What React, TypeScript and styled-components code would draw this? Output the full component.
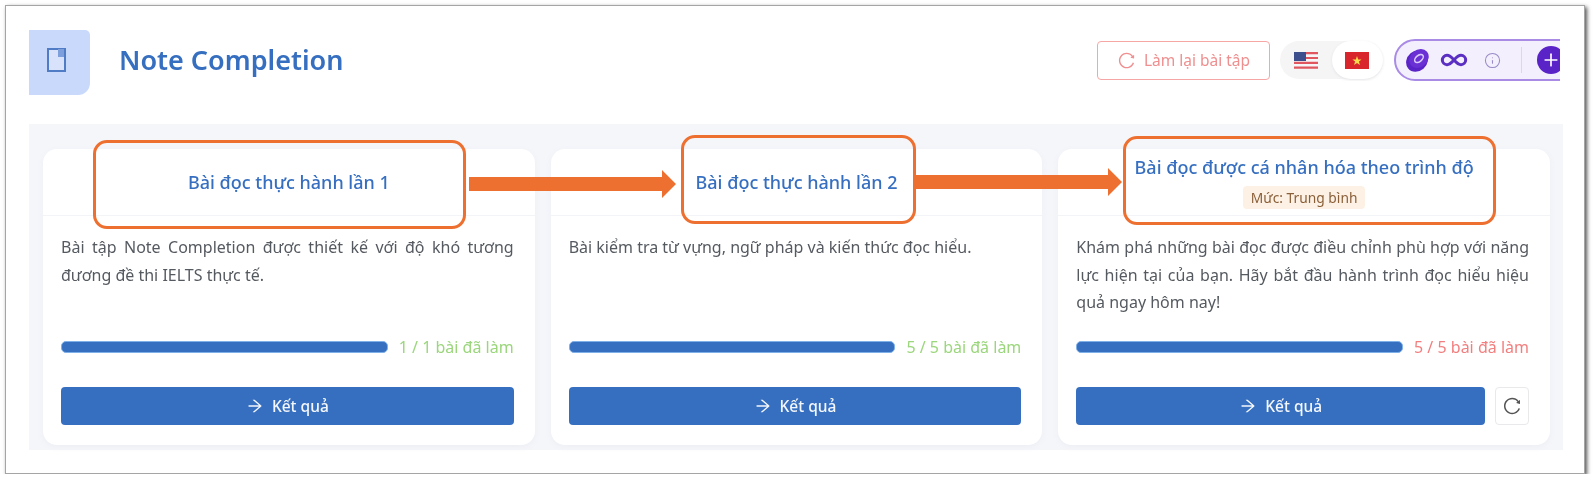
import styled, { createGlobalStyle } from "styled-components";
import { Infinity as InfinityIcon, Info, Plus } from "lucide-react";
import { AiOutlineArrowRight, AiOutlineReload } from "react-icons/ai";

const GlobalStyle = createGlobalStyle`
  html, body {
    margin: 0;
    background: #ffffff;
    font-family: "Noto Sans", "Liberation Sans", sans-serif;
  }
`;

const Frame = styled.div`
  position: relative;
  box-sizing: border-box;
  width: 1580px;
  height: 469px;
  margin: 5px 0 0 5px;
  padding: 0 21px 0 23px;
  background: #ffffff;
  border: 1px solid #a5a5a5;
  box-shadow: 2px 2px 4px #555555;
  filter: blur(0.6px);
`;

const Header = styled.header`
  display: flex;
  align-items: flex-start;
  height: 118px;
  padding-top: 24px;
  box-sizing: border-box;
`;

const IconTile = styled.div`
  display: flex;
  flex: none;
  align-items: center;
  justify-content: center;
  width: 61px;
  height: 65px;
  padding: 0 6px 5px 0;
  box-sizing: border-box;
  background: #c9d9fb;
  border-radius: 0 5px 12px 0;
`;

const Title = styled.h1`
  margin: 10px 0 0 29px;
  color: #366fc0;
  font-size: 27px;
  font-weight: 600;
  line-height: 40px;
`;

const Actions = styled.div`
  display: flex;
  align-items: center;
  gap: 10px;
  width: 463px;
  margin: 9px 3px 0 auto;
  overflow: hidden;
`;

const RedoButton = styled.button`
  display: flex;
  flex: none;
  align-items: center;
  justify-content: center;
  gap: 8px;
  box-sizing: border-box;
  width: 173px;
  height: 39px;
  padding: 0;
  background: #ffffff;
  border: 1.5px solid #f7a6a6;
  border-radius: 4px;
  color: #ef8f8f;
  font: 400 15.5px "Noto Sans", sans-serif;
`;

const FlagGroup = styled.div`
  display: flex;
  flex: none;
  align-items: center;
  box-sizing: border-box;
  width: 103px;
  height: 38px;
  background: #f5f5f6;
  border-radius: 19px;
`;

const FlagSlot = styled.div<{ $active?: boolean }>`
  display: flex;
  flex: 1;
  align-items: center;
  justify-content: center;
  height: 100%;
  background: ${(props) => (props.$active ? "#ffffff" : "transparent")};
  border-radius: 19px;
  box-shadow: ${(props) => (props.$active ? "0 1px 3px #e4e4e8" : "none")};
`;

const CreditPill = styled.div`
  display: flex;
  flex: none;
  align-items: center;
  box-sizing: border-box;
  width: 190px;
  height: 42px;
  margin-left: 1px;
  padding-left: 9px;
  background: #f3effc;
  border: 2px solid #a98be6;
  border-radius: 21px;
  color: #5a2fc2;
`;

const InfoWrap = styled.span`
  display: flex;
  margin-left: 16px;
  color: #9a8ac8;
`;

const PillDivider = styled.span`
  width: 1px;
  height: 26px;
  margin-left: 20px;
  background: #dcd8ea;
`;

const PlusCircle = styled.span`
  display: flex;
  flex: none;
  align-items: center;
  justify-content: center;
  width: 28px;
  height: 28px;
  margin-left: 15px;
  background: #5a23c8;
  border-radius: 50%;
  color: #ffffff;
`;

const Panel = styled.section`
  display: grid;
  grid-template-columns: repeat(3, 1fr);
  gap: 16px;
  box-sizing: border-box;
  height: 326px;
  padding: 25px 13px 5px 14px;
  background: #f5f6fa;
`;

const Card = styled.article`
  display: flex;
  flex-direction: column;
  background: #ffffff;
  border-radius: 14px;
  box-shadow: 0 2px 6px #eceef4;
`;

const CardHeader = styled.div`
  display: flex;
  flex: none;
  flex-direction: column;
  align-items: center;
  justify-content: center;
  gap: 7px;
  box-sizing: border-box;
  height: 67px;
  border-bottom: 1px solid #f3f4f7;
`;

const CardTitle = styled.h2`
  margin: 0;
  color: #366fc0;
  font-size: 18px;
  font-weight: 500;
  line-height: 24px;
`;

const LevelBadge = styled.span`
  padding: 0 8px;
  background: #fdf1e5;
  border-radius: 4px;
  color: #8a5f38;
  font-size: 13.8px;
  line-height: 23px;
`;

const CardBody = styled.div`
  display: flex;
  flex: 1;
  flex-direction: column;
  padding: 18px 21px 20px 18px;
`;

const Description = styled.p`
  flex: 1;
  margin: 0;
  color: #555a60;
  font-size: 16px;
  line-height: 27.5px;
  text-align: justify;
`;

const ProgressRow = styled.div`
  display: flex;
  align-items: center;
  gap: 11px;
  margin-bottom: 30px;
`;

const Track = styled.div`
  flex: 1;
  height: 10px;
  background: #366fc0;
  border: 0.5px solid #7fb0e8;
  border-radius: 5px;
`;

const ProgressText = styled.span<{ $tone: "green" | "red" }>`
  color: ${(props) => (props.$tone === "green" ? "#9bd67c" : "#f27f7f")};
  font-size: 16px;
  line-height: 20px;
  white-space: nowrap;
`;

const ButtonRow = styled.div`
  display: flex;
  gap: 10px;
`;

const ResultButton = styled.button`
  display: flex;
  flex: 1;
  align-items: center;
  justify-content: center;
  gap: 8px;
  height: 38px;
  padding: 0;
  background: #366fc0;
  border: 0;
  border-radius: 4px;
  color: #f4f7fc;
  font: 500 15.5px "Noto Sans", sans-serif;
`;

const RetryButton = styled.button`
  display: flex;
  flex: none;
  align-items: center;
  justify-content: center;
  width: 34px;
  height: 38px;
  padding: 0;
  background: #ffffff;
  border: 1px solid #e9e9ec;
  border-radius: 4px;
  color: #555555;
`;

// orange callouts drawn over the cards, offsets are relative to the frame
const Callout = styled.div<{ $x: number; $y: number; $w: number; $h: number }>`
  position: absolute;
  left: ${(props) => props.$x}px;
  top: ${(props) => props.$y}px;
  box-sizing: border-box;
  width: ${(props) => props.$w}px;
  height: ${(props) => props.$h}px;
  border: 3px solid #ee7030;
  border-radius: 14px;
`;

const Arrow = styled.svg<{ $x: number; $y: number }>`
  position: absolute;
  left: ${(props) => props.$x}px;
  top: ${(props) => props.$y}px;
`;

function ArrowMark({ x, y, width }: { x: number; y: number; width: number }) {
  return (
    <Arrow $x={x} $y={y} width={width} height={28} viewBox={`0 0 ${width} 28`}>
      <path
        d={`M0 7H${width - 14}V0L${width} 14L${width - 14} 28V21H0Z`}
        fill="#ee7030"
      />
    </Arrow>
  );
}

function NoteIcon() {
  return (
    <svg width="19" height="24" viewBox="0 0 19 24">
      <rect x="1" y="1" width="17" height="22" fill="#d8e3fb" stroke="#4f7cc4" strokeWidth="2" />
      <path d="M11 1H17V9H11Z" fill="#7d9fdb" />
    </svg>
  );
}

function UsFlag() {
  return (
    <svg width="24" height="17" viewBox="0 0 24 17">
      <rect width="24" height="17" fill="#f6f6f8" />
      <path d="M0 1.2H24M0 6H24M0 10.8H24M0 15.6H24" stroke="#e0575f" strokeWidth="2.2" />
      <rect width="12" height="9" fill="#3d4f8c" />
    </svg>
  );
}

function VnFlag() {
  return (
    <svg width="24" height="17" viewBox="0 0 24 17">
      <rect width="24" height="17" fill="#d8262c" />
      <path d="M12 4L13.2 7.4H16.6L13.9 9.5L14.9 13L12 10.9L9.1 13L10.1 9.5L7.4 7.4H10.8Z" fill="#f8dc4a" />
    </svg>
  );
}

function CoinIcon() {
  return (
    <svg width="26" height="26" viewBox="0 0 26 26">
      <ellipse cx="12" cy="14" rx="11.5" ry="10" transform="rotate(-40 12 14)" fill="#5a23c8" />
      <ellipse cx="14" cy="11.5" rx="10.5" ry="8.5" transform="rotate(-40 14 11.5)" fill="#6a30d4" />
      <ellipse cx="14" cy="11.5" rx="5" ry="3" transform="rotate(-40 14 11.5)" fill="none" stroke="#d9c9fb" strokeWidth="1.6" />
    </svg>
  );
}

type PracticeCard = {
  title: string;
  level?: string;
  description: string;
  progress: string;
  tone: "green" | "red";
  canRetry?: boolean;
};

const cards: PracticeCard[] = [
  {
    title: "Bài đọc thực hành lần 1",
    description:
      "Bài tập Note Completion được thiết kế với độ khó tương đương đề thi IELTS thực tế.",
    progress: "1 / 1 bài đã làm",
    tone: "green",
  },
  {
    title: "Bài đọc thực hành lần 2",
    description: "Bài kiểm tra từ vựng, ngữ pháp và kiến thức đọc hiểu.",
    progress: "5 / 5 bài đã làm",
    tone: "green",
  },
  {
    title: "Bài đọc được cá nhân hóa theo trình độ",
    level: "Mức: Trung bình",
    description:
      "Khám phá những bài đọc được điều chỉnh phù hợp với năng lực hiện tại của bạn. Hãy bắt đầu hành trình đọc hiểu hiệu quả ngay hôm nay!",
    progress: "5 / 5 bài đã làm",
    tone: "red",
    canRetry: true,
  },
];

export default function App() {
  return (
    <>
      <GlobalStyle />
      <Frame>
        <Header>
          <IconTile>
            <NoteIcon />
          </IconTile>
          <Title>Note Completion</Title>
          <Actions>
            <RedoButton>
              <AiOutlineReload size={19} />
              Làm lại bài tập
            </RedoButton>
            <FlagGroup>
              <FlagSlot>
                <UsFlag />
              </FlagSlot>
              <FlagSlot $active>
                <VnFlag />
              </FlagSlot>
            </FlagGroup>
            <CreditPill>
              <CoinIcon />
              <InfinityIcon size={28} strokeWidth={2.6} style={{ marginLeft: 9 }} />
              <InfoWrap>
                <Info size={17} strokeWidth={1.5} />
              </InfoWrap>
              <PillDivider />
              <PlusCircle>
                <Plus size={20} strokeWidth={2} />
              </PlusCircle>
            </CreditPill>
          </Actions>
        </Header>
        <Panel>
          {cards.map((card) => (
            <Card key={card.title}>
              <CardHeader>
                <CardTitle>{card.title}</CardTitle>
                {card.level && <LevelBadge>{card.level}</LevelBadge>}
              </CardHeader>
              <CardBody>
                <Description>{card.description}</Description>
                <ProgressRow>
                  <Track />
                  <ProgressText $tone={card.tone}>{card.progress}</ProgressText>
                </ProgressRow>
                <ButtonRow>
                  <ResultButton>
                    <AiOutlineArrowRight size={18} />
                    Kết quả
                  </ResultButton>
                  {card.canRetry && (
                    <RetryButton>
                      <AiOutlineReload size={20} />
                    </RetryButton>
                  )}
                </ButtonRow>
              </CardBody>
            </Card>
          ))}
        </Panel>
        <Callout $x={87} $y={134} $w={373} $h={89} />
        <Callout $x={675} $y={129} $w={235} $h={89} />
        <Callout $x={1117} $y={130} $w={373} $h={89} />
        <ArrowMark x={463} y={164} width={207} />
        <ArrowMark x={909} y={162} width={207} />
      </Frame>
    </>
  );
}
